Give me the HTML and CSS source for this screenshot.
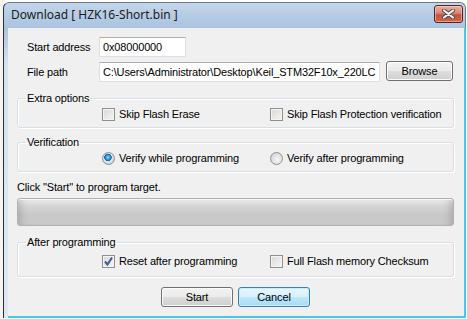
FILE: index.html
```html
<!DOCTYPE html>
<html lang="en">
<head>
    <meta charset="UTF-8">
    <meta name="viewport" content="width=device-width, initial-scale=1.0">
    <title>Download</title>
    <link rel="stylesheet" href="styles.css">
</head>
<body>

    <div class="desk">
        <div class="window">
            <div class="titlebar">
                <span class="title">Download [ HZK16-Short.bin ]</span>
                <span class="close">
                    <svg width="13" height="10" viewBox="0 0 13 10">
                        <path d="M2 1.5 L11 8.5 M11 1.5 L2 8.5" stroke="#4a4a4a" stroke-width="4" stroke-linecap="round"/>
                        <path d="M2 1.5 L11 8.5 M11 1.5 L2 8.5" stroke="#f4f4f4" stroke-width="2.2" stroke-linecap="round"/>
                    </svg>
                </span>
            </div>

            <div class="client">
                <div class="field-row row-addr">
                    <span class="field-label">Start address</span>
                    <div class="textbox addr">0x08000000</div>
                </div>
                <div class="field-row row-path">
                    <span class="field-label">File path</span>
                    <div class="textbox path">C:\Users\Administrator\Desktop\Keil_STM32F10x_220LC</div>
                    <button class="btn browse">Browse</button>
                </div>

                <fieldset class="group">
                    <legend>Extra options</legend>
                    <div class="opts">
                        <label class="opt"><span class="check"></span>Skip Flash Erase</label>
                        <label class="opt"><span class="check"></span>Skip Flash Protection verification</label>
                    </div>
                </fieldset>

                <fieldset class="group">
                    <legend>Verification</legend>
                    <div class="opts">
                        <label class="opt"><span class="radio on"></span>Verify while programming</label>
                        <label class="opt"><span class="radio"></span>Verify after programming</label>
                    </div>
                </fieldset>

                <p class="status">Click "Start" to program target.</p>
                <div class="progress"></div>

                <fieldset class="group after">
                    <legend>After programming</legend>
                    <div class="opts">
                        <label class="opt">
                            <span class="check">
                                <svg width="11" height="11" viewBox="0 0 11 11">
                                    <path d="M2 5.5 L4.5 8.5 L9 1.5" fill="none" stroke="#3d5a9a" stroke-width="2"/>
                                </svg>
                            </span>Reset after programming
                        </label>
                        <label class="opt"><span class="check"></span>Full Flash memory Checksum</label>
                    </div>
                </fieldset>

                <div class="actions">
                    <button class="btn">Start</button>
                    <button class="btn default">Cancel</button>
                </div>
            </div>
        </div>
    </div>

</body>
</html>
```

FILE: styles.css
```css
body {
    margin: 0;
    background: #ffffff;
    font-family: 'Liberation Sans', Arial, sans-serif;
    font-size: 11px;
    letter-spacing: -0.15px;
    color: #000;
}
.desk {
    width: 467px;
    height: 319px;
    overflow: hidden;
    padding-top: 2px;
    box-sizing: border-box;
    border-left: 3px solid #f4f4f4;
}
.window {
    width: 463px;
    border-left: 1px solid #2e2e2e;
    border-top: 1px solid #6d7a88;
    border-right: 1px solid #6d7a88;
    border-radius: 6px 6px 0 0;
    background: linear-gradient(to bottom, #c3d5ea, #aac3df 25px, #d6e2ef 60px, #dfe8f2);
    box-sizing: border-box;
}
.titlebar {
    height: 25px;
    display: flex;
    justify-content: space-between;
    align-items: flex-start;
    padding-left: 7px;
}
.title {
    font-family: 'Noto Sans', 'Liberation Sans', sans-serif;
    font-size: 12px;
    letter-spacing: 0;
    line-height: 24px;
    color: #1b1b1b;
}
.close {
    width: 27px;
    height: 16px;
    margin: 2px 2px 0 0;
    border: 1px solid #5a2219;
    border-radius: 3px;
    background: linear-gradient(to bottom, #eab1a5 0%, #d98674 45%, #c5533c 55%, #d0664c 100%);
    box-shadow: inset 0 0 0 1px rgba(255, 220, 210, 0.5);
    display: flex;
    justify-content: center;
    align-items: center;
}
.client {
    margin-left: 4px;
    width: 456px;
    height: 288px;
    background: #f0f0f0;
    border-right: 2px solid #4dc6ee;
    border-bottom: 2px solid #4dc6ee;
    padding: 9px 10px 0 9px;
    box-sizing: content-box;
    box-sizing: border-box;
    width: 458px;
    height: 290px;
}
.field-row {
    display: flex;
    align-items: center;
    height: 20px;
    padding-left: 10px;
}
.row-path {
    margin-top: 5px;
}
.field-label {
    width: 72px;
}
.textbox {
    height: 20px;
    box-sizing: border-box;
    background: #fff;
    border: 1px solid #dcdfe4;
    border-top-color: #abadb3;
    padding: 0 3px;
    line-height: 18px;
    white-space: nowrap;
    overflow: hidden;
}
.addr {
    width: 87px;
}
.path {
    width: 281px;
}
.btn {
    font-family: inherit;
    font-size: 11px;
    letter-spacing: -0.15px;
    color: #000;
    width: 72px;
    height: 20px;
    padding: 0;
    border: 1px solid #707070;
    border-radius: 3px;
    background: linear-gradient(to bottom, #f2f2f2 0%, #ebebeb 48%, #dddddd 52%, #cfcfcf 100%);
    box-shadow: inset 0 0 0 1px #fbfbfb;
}
.browse {
    width: 67px;
    margin: -2px 0 0 6px;
}
.default {
    border-color: #3c7fb1;
    background: linear-gradient(to bottom, #eaf6fd 0%, #d9f0fc 48%, #bee6fd 52%, #a7d9f5 100%);
    box-shadow: inset 0 0 0 1px #c7ecfc;
}
.group {
    margin: 10px 0 0 0;
    padding: 0 0 4px 0;
    border: 1px solid #d5dfe5;
    border-radius: 3px;
    box-shadow: inset 1px 1px 0 #fff, 1px 1px 0 #fff;
}
.group + .group {
    margin-top: 8px;
}
.group legend {
    margin-left: 8px;
    padding: 0 1px;
    line-height: 13px;
}
.opts {
    display: grid;
    grid-template-columns: 168px auto;
    height: 18px;
    padding-left: 84px;
    align-items: center;
}
.after {
    padding: 3px 0 6px 0;
}
.opt {
    display: flex;
    align-items: center;
}
.check {
    width: 13px;
    height: 13px;
    box-sizing: border-box;
    border: 1px solid #8e8f8f;
    background: linear-gradient(135deg, #d8d8d8, #f6f6f6);
    box-shadow: inset 0 0 0 1px #f4f4f4;
    margin-right: 4px;
    display: flex;
    justify-content: center;
    align-items: center;
}
.check svg {
    display: block;
}
.radio {
    width: 13px;
    height: 13px;
    box-sizing: border-box;
    border: 1px solid #8e8f8f;
    border-radius: 50%;
    background: radial-gradient(circle at 60% 60%, #f6f6f6 0, #dadada 70%);
    margin-right: 4px;
}
.radio.on {
    background: radial-gradient(circle at 45% 40%, #8fdcff 0, #1e8fd8 2.5px, #0b5fa8 3.5px, #e8e8e8 4px, #d4d4d4 6px);
}
.status {
    margin: 9px 0 0 0;
    line-height: 13px;
}
.progress {
    margin-top: 4px;
    height: 28px;
    box-sizing: border-box;
    border: 1px solid #b1b1b1;
    border-radius: 3px;
    background: linear-gradient(to bottom, #ececec 0%, #d6d6d6 25%, #c8c8c8 60%, #cbcbcb 100%);
    box-shadow: inset 0 1px 0 #f7f7f7, inset 8px 0 8px -6px rgba(0, 0, 0, 0.18), inset -8px 0 8px -6px rgba(0, 0, 0, 0.18);
}
.group.after {
    margin-top: 10px;
}
.actions {
    display: flex;
    justify-content: center;
    gap: 5px;
    margin-top: 10px;
}
```
